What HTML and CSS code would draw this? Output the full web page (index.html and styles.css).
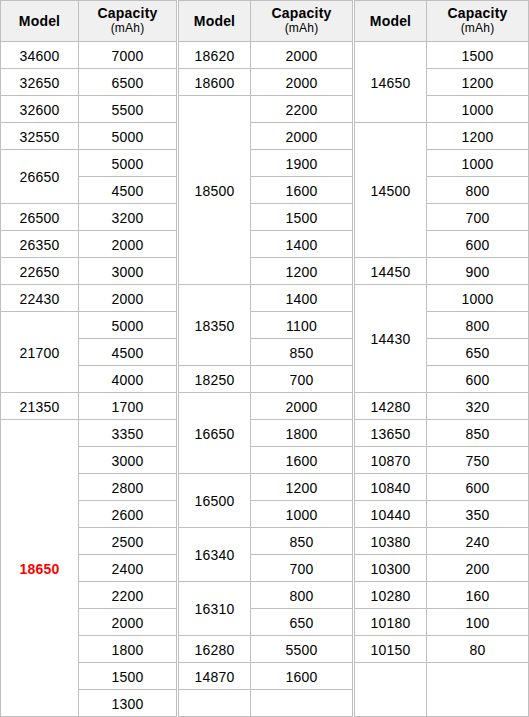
FILE: index.html
```html
<!DOCTYPE html>
<html>
<head>
<meta charset="utf-8">
<link rel="stylesheet" href="styles.css">
</head>
<body>
<div class="tables">
  <table class="grp grp-a">
    <colgroup><col class="c-model"><col class="c-cap"></colgroup>
    <tr class="head"><th>Model</th><th><span class="cap">Capacity</span><span class="unit">(mAh)</span></th></tr>
    <tr><td>34600</td><td>7000</td></tr>
    <tr><td>32650</td><td>6500</td></tr>
    <tr><td>32600</td><td>5500</td></tr>
    <tr><td>32550</td><td>5000</td></tr>
    <tr><td rowspan="2">26650</td><td>5000</td></tr>
    <tr><td>4500</td></tr>
    <tr><td>26500</td><td>3200</td></tr>
    <tr><td>26350</td><td>2000</td></tr>
    <tr><td>22650</td><td>3000</td></tr>
    <tr><td>22430</td><td>2000</td></tr>
    <tr><td rowspan="3">21700</td><td>5000</td></tr>
    <tr><td>4500</td></tr>
    <tr><td>4000</td></tr>
    <tr><td>21350</td><td>1700</td></tr>
    <tr><td rowspan="11" class="hot">18650</td><td>3350</td></tr>
    <tr><td>3000</td></tr>
    <tr><td>2800</td></tr>
    <tr><td>2600</td></tr>
    <tr><td>2500</td></tr>
    <tr><td>2400</td></tr>
    <tr><td>2200</td></tr>
    <tr><td>2000</td></tr>
    <tr><td>1800</td></tr>
    <tr><td>1500</td></tr>
    <tr><td>1300</td></tr>
  </table>
  <table class="grp grp-b">
    <colgroup><col class="c-model"><col class="c-cap"></colgroup>
    <tr class="head"><th>Model</th><th><span class="cap">Capacity</span><span class="unit">(mAh)</span></th></tr>
    <tr><td>18620</td><td>2000</td></tr>
    <tr><td>18600</td><td>2000</td></tr>
    <tr><td rowspan="7">18500</td><td>2200</td></tr>
    <tr><td>2000</td></tr>
    <tr><td>1900</td></tr>
    <tr><td>1600</td></tr>
    <tr><td>1500</td></tr>
    <tr><td>1400</td></tr>
    <tr><td>1200</td></tr>
    <tr><td rowspan="3">18350</td><td>1400</td></tr>
    <tr><td>1100</td></tr>
    <tr><td>850</td></tr>
    <tr><td>18250</td><td>700</td></tr>
    <tr><td rowspan="3">16650</td><td>2000</td></tr>
    <tr><td>1800</td></tr>
    <tr><td>1600</td></tr>
    <tr><td rowspan="2">16500</td><td>1200</td></tr>
    <tr><td>1000</td></tr>
    <tr><td rowspan="2">16340</td><td>850</td></tr>
    <tr><td>700</td></tr>
    <tr><td rowspan="2">16310</td><td>800</td></tr>
    <tr><td>650</td></tr>
    <tr><td>16280</td><td>5500</td></tr>
    <tr><td>14870</td><td>1600</td></tr>
    <tr><td></td><td></td></tr>
  </table>
  <table class="grp grp-c">
    <colgroup><col class="c-model"><col class="c-cap"></colgroup>
    <tr class="head"><th>Model</th><th><span class="cap">Capacity</span><span class="unit">(mAh)</span></th></tr>
    <tr><td rowspan="3">14650</td><td>1500</td></tr>
    <tr><td>1200</td></tr>
    <tr><td>1000</td></tr>
    <tr><td rowspan="5">14500</td><td>1200</td></tr>
    <tr><td>1000</td></tr>
    <tr><td>800</td></tr>
    <tr><td>700</td></tr>
    <tr><td>600</td></tr>
    <tr><td>14450</td><td>900</td></tr>
    <tr><td rowspan="4">14430</td><td>1000</td></tr>
    <tr><td>800</td></tr>
    <tr><td>650</td></tr>
    <tr><td>600</td></tr>
    <tr><td>14280</td><td>320</td></tr>
    <tr><td>13650</td><td>850</td></tr>
    <tr><td>10870</td><td>750</td></tr>
    <tr><td>10840</td><td>600</td></tr>
    <tr><td>10440</td><td>350</td></tr>
    <tr><td>10380</td><td>240</td></tr>
    <tr><td>10300</td><td>200</td></tr>
    <tr><td>10280</td><td>160</td></tr>
    <tr><td>10180</td><td>100</td></tr>
    <tr><td>10150</td><td>80</td></tr>
    <tr><td class="tall"></td><td class="tall"></td></tr>
  </table>
</div>
</body>
</html>
```
FILE: styles.css
```css
html, body {
  margin: 0;
  padding: 0;
  background: #ffffff;
}

body {
  font-family: "Liberation Sans", Arial, sans-serif;
  font-size: 14px;
  color: #000000;
}

.tables {
  display: flex;
  align-items: flex-start;
  gap: 1px;
}

.grp {
  border-collapse: separate;
  border-spacing: 0;
  table-layout: fixed;
  border-left: 1px solid #bfbfbf;
  border-top: 1px solid #bfbfbf;
}

.grp-a { width: 177px; }
.grp-b, .grp-c { width: 175px; }

.grp-a .c-model { width: 78px; }
.grp-a .c-cap { width: 98px; }
.grp-b .c-model, .grp-c .c-model { width: 72px; }
.grp-b .c-cap, .grp-c .c-cap { width: 102px; }

.grp th,
.grp td {
  padding: 0;
  border-right: 1px solid #bfbfbf;
  border-bottom: 1px solid #bfbfbf;
  text-align: center;
  vertical-align: middle;
  box-sizing: border-box;
  letter-spacing: 0.2px;
}

.grp td {
  height: 27px;
  line-height: 16px;
  padding-top: 1px;
  font-weight: normal;
}

.grp th {
  height: 41px;
  background: #f0f0f0;
  font-weight: bold;
  font-size: 14px;
}

.cap {
  display: block;
  line-height: 15px;
}

.unit {
  display: block;
  line-height: 15px;
  font-size: 12px;
  font-weight: normal;
}

.grp td.hot {
  color: #ff0000;
  font-weight: bold;
}

.grp td.tall {
  height: 54px;
}
```
